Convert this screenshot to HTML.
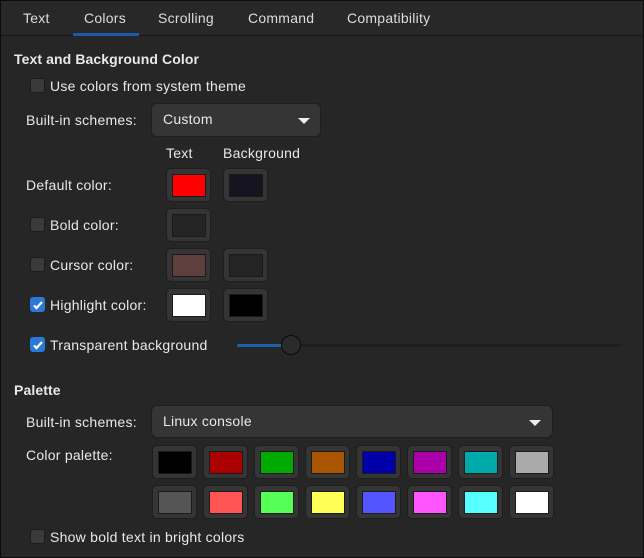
<!DOCTYPE html>
<html><head><meta charset="utf-8"><style>
*{margin:0;padding:0;box-sizing:border-box}
body{width:644px;height:558px;background:#262626;font-family:"Liberation Sans",sans-serif;font-size:14px;letter-spacing:0.25px;color:#e8e8e8;position:relative;overflow:hidden}
.frame{position:absolute;left:0;top:0;width:644px;height:558px;border:1px solid #0c0c0c}
.tabs{position:absolute;left:1px;top:1px;width:642px;height:35px;background:#282828;border-bottom:1px solid #161616}
.tab{position:absolute;top:9px;color:#dcdcdc}
.ul{position:absolute;left:72px;top:32px;width:66px;height:3px;background:#1b5aa8}
.a{position:absolute;white-space:nowrap}
.h{font-weight:bold;letter-spacing:0.1px}
.cb{position:absolute;width:15px;height:15px;border-radius:3px;background:#3a3a3a;border:1px solid #1c1c1c}
.cb.on{background:#2a78d8;border-color:#2a78d8}
.cb.on svg{position:absolute;left:1px;top:1px}
.combo{position:absolute;background:#353535;border:1px solid #1e1e1e;border-radius:6px}
.combo span{position:absolute;left:11px;top:7px}
.tri{position:absolute;width:0;height:0;border-left:6px solid transparent;border-right:6px solid transparent;border-top:6px solid #eee}
.cbtn{position:absolute;width:45px;height:34px;background:#353535;border:1px solid #1e1e1e;border-radius:5px}
.cbtn i{position:absolute;left:5px;top:5px;width:34px;height:23px;border:1px solid #1a1a1a}
</style></head><body>
<div class="tabs">
<span class="tab" style="left:22px">Text</span>
<span class="tab" style="left:83px">Colors</span>
<span class="tab" style="left:157px">Scrolling</span>
<span class="tab" style="left:247px">Command</span>
<span class="tab" style="left:346px">Compatibility</span>
<div class="ul"></div>
</div>
<div class="frame"></div>

<div class="a h" style="left:14px;top:51px">Text and Background Color</div>
<div class="cb" style="left:30px;top:78px"></div>
<div class="a" style="left:50px;top:78px">Use colors from system theme</div>
<div class="a" style="left:26px;top:112px">Built-in schemes:</div>
<div class="combo" style="left:151px;top:103px;width:170px;height:34px"><span>Custom</span><div class="tri" style="left:146px;top:14px"></div></div>
<div class="a" style="left:166px;top:145px">Text</div>
<div class="a" style="left:223px;top:145px">Background</div>

<div class="a" style="left:26px;top:177px">Default color:</div>
<div class="cbtn" style="left:166px;top:168px"><i style="background:#ff0000"></i></div>
<div class="cbtn" style="left:223px;top:168px"><i style="background:#171421"></i></div>

<div class="cb" style="left:30px;top:217px"></div>
<div class="a" style="left:50px;top:217px">Bold color:</div>
<div class="cbtn" style="left:166px;top:208px"><i style="background:#242424"></i></div>

<div class="cb" style="left:30px;top:257px"></div>
<div class="a" style="left:50px;top:257px">Cursor color:</div>
<div class="cbtn" style="left:166px;top:248px"><i style="background:#5f3e3e"></i></div>
<div class="cbtn" style="left:223px;top:248px"><i style="background:#242424"></i></div>

<div class="cb on" style="left:30px;top:297px"><svg width="12" height="12" viewBox="0 0 12 12"><path d="M2 6.5l2.5 2.5L10 3" stroke="#fff" stroke-width="2.2" fill="none"/></svg></div>
<div class="a" style="left:50px;top:297px">Highlight color:</div>
<div class="cbtn" style="left:166px;top:288px"><i style="background:#ffffff"></i></div>
<div class="cbtn" style="left:223px;top:288px"><i style="background:#000000"></i></div>

<div class="cb on" style="left:30px;top:337px"><svg width="12" height="12" viewBox="0 0 12 12"><path d="M2 6.5l2.5 2.5L10 3" stroke="#fff" stroke-width="2.2" fill="none"/></svg></div>
<div class="a" style="left:50px;top:337px">Transparent background</div>
<div style="position:absolute;left:237px;top:344px;width:384px;height:3px;background:#1e1e1e;border-radius:2px"></div>
<div style="position:absolute;left:237px;top:344px;width:54px;height:3px;background:#1f5fb0;border-radius:2px"></div>
<div style="position:absolute;left:281px;top:335px;width:20px;height:20px;border-radius:50%;background:#2b2b2b;border:1px solid #0a0a0a"></div>

<div class="a h" style="left:14px;top:382px">Palette</div>
<div class="a" style="left:26px;top:414px">Built-in schemes:</div>
<div class="combo" style="left:151px;top:405px;width:402px;height:33px"><span>Linux console</span><div class="tri" style="left:377px;top:14px"></div></div>
<div class="a" style="left:26px;top:447px">Color palette:</div>

<div class="cbtn" style="left:152px;top:445px"><i style="background:#000000"></i></div>
<div class="cbtn" style="left:203px;top:445px"><i style="background:#aa0000"></i></div>
<div class="cbtn" style="left:254px;top:445px"><i style="background:#00aa00"></i></div>
<div class="cbtn" style="left:305px;top:445px"><i style="background:#aa5500"></i></div>
<div class="cbtn" style="left:356px;top:445px"><i style="background:#0000aa"></i></div>
<div class="cbtn" style="left:407px;top:445px"><i style="background:#aa00aa"></i></div>
<div class="cbtn" style="left:458px;top:445px"><i style="background:#00aaaa"></i></div>
<div class="cbtn" style="left:509px;top:445px"><i style="background:#aaaaaa"></i></div>

<div class="cbtn" style="left:152px;top:485px"><i style="background:#555555"></i></div>
<div class="cbtn" style="left:203px;top:485px"><i style="background:#ff5555"></i></div>
<div class="cbtn" style="left:254px;top:485px"><i style="background:#55ff55"></i></div>
<div class="cbtn" style="left:305px;top:485px"><i style="background:#ffff55"></i></div>
<div class="cbtn" style="left:356px;top:485px"><i style="background:#5555ff"></i></div>
<div class="cbtn" style="left:407px;top:485px"><i style="background:#ff55ff"></i></div>
<div class="cbtn" style="left:458px;top:485px"><i style="background:#55ffff"></i></div>
<div class="cbtn" style="left:509px;top:485px"><i style="background:#ffffff"></i></div>

<div class="cb" style="left:30px;top:529px"></div>
<div class="a" style="left:50px;top:529px">Show bold text in bright colors</div>
</body></html>
